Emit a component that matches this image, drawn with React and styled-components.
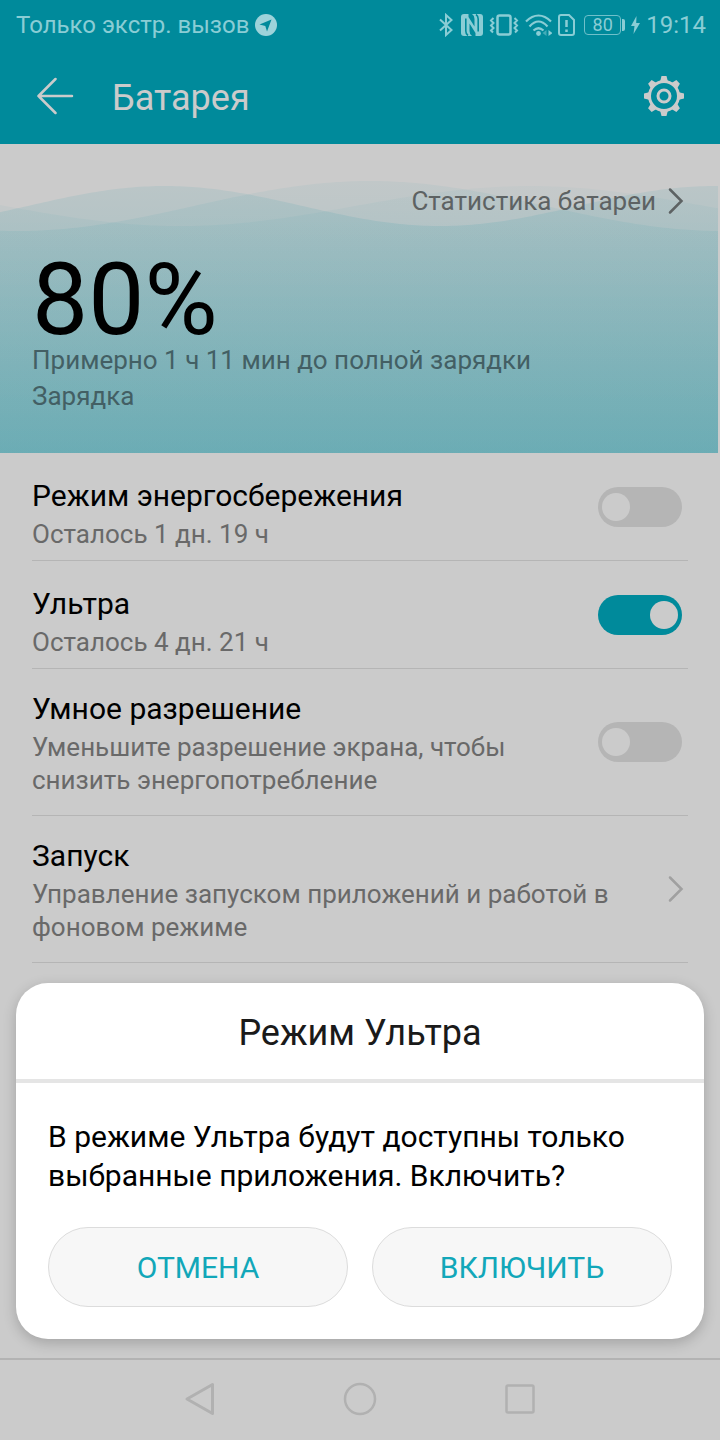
import React from "react";
import styled, { createGlobalStyle } from "styled-components";

const GlobalStyle = createGlobalStyle`
  *, *::before, *::after { box-sizing: border-box; }
  body {
    margin: 0;
    background: #cbcbcb;
    font-family: Roboto, "Noto Sans", sans-serif;
    color: #000;
  }
  h1, h2, p { margin: 0; font-weight: 400; }
  button { font: inherit; padding: 0; border: 0; background: none; cursor: pointer; }
  svg { display: block; flex: none; }
`;

const Screen = styled.div`
  position: relative;
  display: flex;
  flex-direction: column;
  min-height: 100vh;
`;

const TopBar = styled.header`
  background: #008a9b;
`;

const StatusBar = styled.div`
  display: flex;
  align-items: center;
  justify-content: space-between;
  height: 50px;
  padding: 0 14px 0 16px;
  font-size: 24px;
  line-height: 28px;
  color: #8acdd5;
`;

const StatusGroup = styled.div`
  display: flex;
  align-items: center;
  gap: 6px;
`;

const BatteryLevel = styled.span`
  display: flex;
  align-items: center;
  margin-left: 3px;
`;

const BatteryShell = styled.span`
  display: flex;
  align-items: center;
  justify-content: center;
  width: 37px;
  height: 20px;
  border: 1px solid #6fc0ca;
  border-radius: 4px;
  font-size: 18px;
  line-height: 18px;
`;

const BatteryTip = styled.span`
  width: 3px;
  height: 12px;
  margin-left: 1px;
  border-radius: 0 2px 2px 0;
  background: #8acdd5;
`;

const TitleBar = styled.div`
  display: flex;
  align-items: center;
  height: 94px;
  padding: 0 32px 2px;
  color: #cbcbcb;
`;

const IconButton = styled.button`
  display: flex;
  align-items: center;
  justify-content: center;
  width: 48px;
  height: 48px;
  color: inherit;
`;

const PageTitle = styled.h1`
  flex: 1;
  padding: 4px 0 0 32px;
  font-size: 36px;
  line-height: 44px;
`;

const Hero = styled.section`
  position: relative;
  display: flex;
  flex-direction: column;
  margin-right: 2px;
  padding: 37px 32px 39px;
`;

const Waves = styled.svg`
  position: absolute;
  inset: 0;
  width: 100%;
  height: 100%;
  z-index: -1;
`;

const StatsLink = styled.a`
  display: flex;
  align-items: center;
  align-self: flex-end;
  gap: 12px;
  padding-right: 2px;
  font-size: 26px;
  line-height: 40px;
  color: #5d6263;
  text-decoration: none;
`;

const Percent = styled.p`
  margin-top: 37px;
  font-size: 100px;
  line-height: 84px;
`;

const HeroNote = styled.p`
  font-size: 26px;
  line-height: 36px;
  color: #435f64;
`;

const SettingsList = styled.main`
  padding: 0 32px;
`;

const Row = styled.label`
  display: flex;
  align-items: center;
  justify-content: space-between;
  border-bottom: 1px solid #b5b5b5;
  color: inherit;
  text-decoration: none;
`;

const RowText = styled.span`
  display: flex;
  flex-direction: column;
  gap: 2px;
  max-width: 600px;
  padding: ${(p) => (p.$compact ? "23px 0 9px" : "20px 0 18px")};
`;

const RowTitle = styled.span`
  font-size: 30px;
  line-height: 40px;
`;

const RowSummary = styled.span`
  max-width: ${(p) => (p.$narrow ? "500px" : "none")};
  font-size: 26px;
  line-height: 33px;
  color: #696969;
`;

const Toggle = styled.input.attrs({ type: "checkbox", role: "switch" })`
  appearance: none;
  display: flex;
  align-items: center;
  flex: none;
  width: 84px;
  height: 40px;
  margin: 0 6px;
  padding: 0 4px;
  border-radius: 20px;
  background: #b5b5b5;
  cursor: pointer;

  &::before {
    content: "";
    width: 28px;
    height: 28px;
    border-radius: 50%;
    background: #cbcbcb;
  }

  &:checked {
    justify-content: flex-end;
    background: #008a9b;
  }
`;

const ChevronSlot = styled.span`
  padding-right: 4px;
  color: #a0a0a0;
`;

const Dialog = styled.section`
  position: absolute;
  left: 16px;
  right: 16px;
  bottom: 101px;
  border-radius: 32px;
  background: #fff;
  box-shadow: 0 4px 14px rgba(0, 0, 0, 0.2);
`;

const DialogTitle = styled.h2`
  padding: 28px 32px 24px;
  border-bottom: 4px solid #e5e5e5;
  font-size: 36px;
  line-height: 44px;
  text-align: center;
  color: #1a1a1a;
`;

const DialogBody = styled.div`
  padding: 34px 32px 32px;
`;

const DialogText = styled.p`
  font-size: 30px;
  line-height: 39px;
`;

const DialogActions = styled.div`
  display: grid;
  grid-template-columns: 1fr 1fr;
  gap: 24px;
  margin-top: 32px;
`;

const DialogButton = styled.button`
  && {
    height: 80px;
    border: 1px solid #dcdcdc;
    border-radius: 40px;
    background: #f7f7f7;
    font-size: 30px;
    color: #12a7b9;
  }
`;

const NavBar = styled.nav`
  display: flex;
  justify-content: center;
  gap: 112px;
  height: 82px;
  margin-top: auto;
  padding: 15px 0 17px;
  border-top: 2px solid #b3b3b3;
  color: #b1b1b1;
`;

const WAVE_W = 718;
const WAVE_H = 309;

function wavePath(crestX, period, mid, amplitude) {
  let d = `M0 ${WAVE_H}`;
  for (let x = 0; x <= WAVE_W + 4; x += 4) {
    const y = mid - amplitude * Math.cos(((x - crestX) / period) * 2 * Math.PI);
    d += `L${x} ${y.toFixed(1)}`;
  }
  return `${d}L${WAVE_W + 4} ${WAVE_H}Z`;
}

const waves = [
  { id: "far", crest: 530, period: 700, mid: 62, amp: 20, top: 0.03, bottom: 0.14 },
  { id: "middle", crest: 370, period: 705, mid: 62, amp: 25, top: 0.05, bottom: 0.18 },
  { id: "near", crest: 165, period: 550, mid: 62, amp: 20, top: 0.08, bottom: 0.25 },
];

function WaveBackground() {
  return (
    <Waves viewBox={`0 0 ${WAVE_W} ${WAVE_H}`} preserveAspectRatio="none" aria-hidden="true">
      <defs>
        {waves.map((w) => (
          <linearGradient key={w.id} id={w.id} gradientUnits="userSpaceOnUse" x1="0" y1="37" x2="0" y2={WAVE_H}>
            <stop offset="0" stopColor="#008a9b" stopOpacity={w.top} />
            <stop offset="1" stopColor="#008a9b" stopOpacity={w.bottom} />
          </linearGradient>
        ))}
      </defs>
      {waves.map((w) => (
        <path key={w.id} d={wavePath(w.crest, w.period, w.mid, w.amp)} fill={`url(#${w.id})`} />
      ))}
    </Waves>
  );
}

const TelegramIcon = () => (
  <svg width="22" height="22" viewBox="0 0 22 22">
    <circle cx="11" cy="11" r="11" fill="#9dd3da" />
    <path d="M4.5 10.5 16.5 5.5 12 17.5 10.3 12Z" fill="#008a9b" />
  </svg>
);

const BluetoothIcon = () => (
  <svg width="16" height="24" viewBox="0 0 16 24" fill="none" stroke="currentColor" strokeWidth="2">
    <path d="M1 6.500 12.500 17 7 22V2l5.500 5L1 17.500" />
  </svg>
);

const NfcIcon = () => (
  <svg width="22" height="22" viewBox="0 0 22 22">
    <rect width="22" height="22" rx="3" fill="currentColor" />
    <path d="M7 21.500Q4.800 20 4.800 17V4.500M15 .500Q17.200 2 17.200 5v12.500" fill="none" stroke="#008a9b" strokeWidth="1.600" />
    <path d="M8.500 9.500 14.500 19V22H11Q8.500 20.500 8.500 17ZM13.500 12.500 7.500 3V0H11Q13.500 1.500 13.500 5Z" fill="#008a9b" />
  </svg>
);

const VibrateIcon = () => (
  <svg width="30" height="22" viewBox="0 0 30 22" fill="none" stroke="currentColor">
    <rect x="8.500" y="1.500" width="13" height="19" rx="2" strokeWidth="2.500" />
    <path d="M4.500 4 2 6.500 4.500 9 2 11.500 4.500 14 2 16.500l2 2M25.500 4 28 6.500 25.500 9 28 11.500 25.500 14 28 16.500l-2 2" strokeWidth="2" />
  </svg>
);

const WifiIcon = () => (
  <svg width="27" height="22" viewBox="0 0 27 22" fill="none" stroke="currentColor" strokeWidth="2.200">
    <path d="M1 7.500Q7 1.500 13.500 1.500T26 7.500M4.500 12.500Q9 7.500 13.500 7.500t9 5M8.500 16.500q5-4.500 10 0" />
    <circle cx="13.500" cy="19.500" r="2.400" fill="currentColor" stroke="none" />
    <path d="M21.500 16v6l-4-3Z" fill="#43acb8" stroke="none" />
    <path d="M23.500 16v6l4-3Z" fill="currentColor" stroke="none" />
  </svg>
);

const SimAlertIcon = () => (
  <svg width="17" height="22" viewBox="0 0 17 22" fill="none" stroke="currentColor" strokeWidth="2">
    <path d="M3 1h8l5 5v13q0 2-2 2H3q-2 0-2-2V3q0-2 2-2Z" />
    <path d="M8.500 6v7M8.500 15.500v2.500" strokeWidth="2.500" />
  </svg>
);

const BoltIcon = () => (
  <svg width="9" height="18" viewBox="0 0 9 18" fill="currentColor">
    <path d="M5.500 0 0 10h3.500L2.500 18 9 7H5.200Z" />
  </svg>
);

const BackIcon = () => (
  <svg width="38" height="38" viewBox="0 0 38 38" fill="none" stroke="currentColor" strokeWidth="2.500" strokeLinecap="round" strokeLinejoin="round">
    <path d="M18.500 2 1.500 19l17 17M1.500 19h33.500" />
  </svg>
);

const GearIcon = () => (
  <svg width="40" height="40" viewBox="0 0 40 40" fill="none" stroke="currentColor">
    <circle cx="20" cy="20" r="14.500" strokeWidth="3" />
    <circle cx="20" cy="20" r="6" strokeWidth="3" />
    {[0, 45, 90, 135, 180, 225, 270, 315].map((angle) => (
      <path key={angle} d="M16 6 17.500 0h5L24 6Z" fill="currentColor" stroke="none" transform={`rotate(${angle} 20 20)`} />
    ))}
  </svg>
);

const ChevronIcon = () => (
  <svg width="16" height="28" viewBox="0 0 16 28" fill="none" stroke="currentColor" strokeWidth="2.500" strokeLinecap="round">
    <path d="M2 2.500 13.500 14 2 25.500" />
  </svg>
);

const BackTriangle = () => (
  <svg width="32" height="36" viewBox="0 0 32 36" fill="none" stroke="currentColor" strokeWidth="3" strokeLinejoin="round">
    <path d="M28.500 3.500v29L3 18Z" />
  </svg>
);

const HomeCircle = () => (
  <svg width="34" height="34" viewBox="0 0 34 34" fill="none" stroke="currentColor" strokeWidth="2.500">
    <circle cx="17" cy="17" r="15" />
  </svg>
);

const RecentSquare = () => (
  <svg width="30" height="30" viewBox="0 0 30 30" fill="none" stroke="currentColor" strokeWidth="2.500">
    <rect x="1.500" y="1.500" width="27" height="27" rx="1.500" />
  </svg>
);

const modes = [
  { title: "Режим энергосбережения", summary: "Осталось 1 дн. 19 ч", compact: true, on: false },
  { title: "Ультра", summary: "Осталось 4 дн. 21 ч", compact: true, on: true },
  { title: "Умное разрешение", summary: "Уменьшите разрешение экрана, чтобы снизить энергопотребление", compact: false, on: false },
];

export default function App() {
  return (
    <>
      <GlobalStyle />
      <Screen>
        <TopBar>
          <StatusBar>
            <StatusGroup>
              <span>Только экстр. вызов</span>
              <TelegramIcon />
            </StatusGroup>
            <StatusGroup>
              <BluetoothIcon />
              <NfcIcon />
              <VibrateIcon />
              <WifiIcon />
              <SimAlertIcon />
              <BatteryLevel>
                <BatteryShell>80</BatteryShell>
                <BatteryTip />
              </BatteryLevel>
              <BoltIcon />
              <span>19:14</span>
            </StatusGroup>
          </StatusBar>
          <TitleBar>
            <IconButton aria-label="Назад">
              <BackIcon />
            </IconButton>
            <PageTitle>Батарея</PageTitle>
            <IconButton aria-label="Настройки">
              <GearIcon />
            </IconButton>
          </TitleBar>
        </TopBar>

        <Hero>
          <WaveBackground />
          <StatsLink href="#stats">
            Статистика батареи
            <ChevronIcon />
          </StatsLink>
          <Percent>80%</Percent>
          <HeroNote>Примерно 1 ч 11 мин до полной зарядки</HeroNote>
          <HeroNote>Зарядка</HeroNote>
        </Hero>

        <SettingsList>
          {modes.map((m) => (
            <Row key={m.title}>
              <RowText $compact={m.compact}>
                <RowTitle>{m.title}</RowTitle>
                <RowSummary $narrow>{m.summary}</RowSummary>
              </RowText>
              <Toggle defaultChecked={m.on} />
            </Row>
          ))}
          <Row as="a" href="#launch">
            <RowText>
              <RowTitle>Запуск</RowTitle>
              <RowSummary>Управление запуском приложений и работой в фоновом режиме</RowSummary>
            </RowText>
            <ChevronSlot>
              <ChevronIcon />
            </ChevronSlot>
          </Row>
        </SettingsList>

        <Dialog role="dialog" aria-labelledby="dialog-title">
          <DialogTitle id="dialog-title">Режим Ультра</DialogTitle>
          <DialogBody>
            <DialogText>В режиме Ультра будут доступны только выбранные приложения. Включить?</DialogText>
            <DialogActions>
              <DialogButton>ОТМЕНА</DialogButton>
              <DialogButton>ВКЛЮЧИТЬ</DialogButton>
            </DialogActions>
          </DialogBody>
        </Dialog>

        <NavBar>
          <IconButton aria-label="Назад">
            <BackTriangle />
          </IconButton>
          <IconButton aria-label="Домой">
            <HomeCircle />
          </IconButton>
          <IconButton aria-label="Недавние">
            <RecentSquare />
          </IconButton>
        </NavBar>
      </Screen>
    </>
  );
}
